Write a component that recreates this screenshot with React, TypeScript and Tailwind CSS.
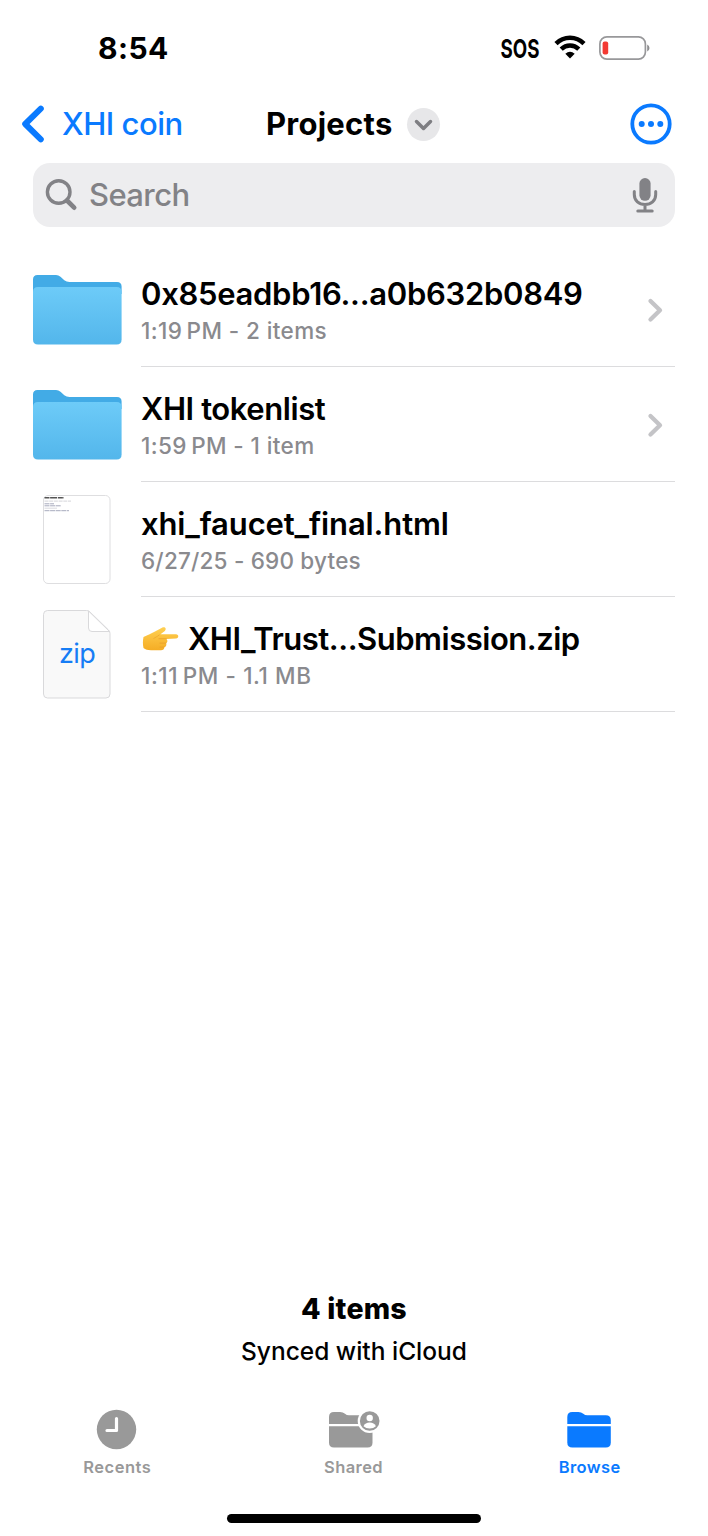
import React from "react";

function FolderIcon({ id }: { id: string }) {
  return (
    <svg width="90" height="72" viewBox="0 0 90 72" className="shrink-0" aria-hidden="true">
      <defs>
        <linearGradient id={id} x1="0" y1="0" x2="0" y2="1">
          <stop offset="0" stopColor="#6dcbf8" />
          <stop offset="1" stopColor="#53b6eb" />
        </linearGradient>
      </defs>
      <path d="M1 20V5.500Q1 1 5.500 1H24Q26.500 1 28.500 2.700L32.300 6.200Q34.500 8 37.500 8H85Q89.600 8 89.600 12.500V20Z" fill="#42abe6" />
      <path d="M1 18Q1 13 6 13H84.600Q89.600 13 89.600 18V65.500Q89.600 70.500 84.600 70.500H6Q1 70.500 1 65.500Z" fill={`url(#${id})`} />
    </svg>
  );
}

function HtmlThumb() {
  return (
    <svg width="68" height="90" viewBox="0 0 68 90" aria-hidden="true">
      <rect x="0.5" y="0.500" width="66.500" height="88" rx="4.500" fill="#fff" stroke="#dedee0" />
      <path d="M1.500 2.800H21" stroke="#555" strokeWidth="1.500" strokeDasharray="5 .6 7 .8" />
      <path d="M1.500 6.100H28" stroke="#c9c9cf" strokeWidth="0.800" strokeDasharray="4 .7" />
      <path d="M1.500 8.800H11M1.500 10.800H18M1.500 15.700H26" stroke="#9da0b5" strokeWidth="0.900" strokeDasharray="5 .6" />
      <path d="M1.500 13.200H14" stroke="#cfd0d8" strokeWidth="0.800" />
    </svg>
  );
}

function ZipIcon() {
  return (
    <div className="relative h-[90px] w-[68px]">
      <svg width="68" height="90" viewBox="0 0 68 90" aria-hidden="true">
        <path d="M4.500 0.500H43.500Q45.500 0.500 47 2L65.500 20Q67 21.500 67 23.500V84Q67 88 63 88H4.500Q0.500 88 0.500 84V4.500Q0.500 0.500 4.500 0.500Z" fill="#f9f9f9" stroke="#d9d9db" />
        <path d="M45.500 1V18Q45.500 21.500 49 21.500H66.500Z" fill="#fff" stroke="#d9d9db" strokeLinejoin="round" />
      </svg>
      <span className="absolute inset-x-0 top-[26px] text-center text-[27px] leading-[36px] tracking-[-0.6px] text-[#167df5]">zip</span>
    </div>
  );
}

function PointingHand() {
  return (
    <svg width="37" height="26" viewBox="0 0 37 26" className="ml-px shrink-0" role="img" aria-label="Pointing right">
      <defs>
        <linearGradient id="hand" x1="0" y1="0" x2="0" y2="1">
          <stop offset="0" stopColor="#ffd052" />
          <stop offset="1" stopColor="#f5ad25" />
        </linearGradient>
      </defs>
      <path d="M1.500 11C5 9.500 9 7.800 13 5.500L20 1.700C23 .2 25 2.800 22.800 4.900L18.500 8.200H34C37 8.200 37 12.300 34 12.500L24.500 13C26 14.500 25.500 16.500 24 17.200C25 18.800 24 20.800 22.200 21.200C22.500 23 21 24.200 19 24.200H9C5.500 24.200 3.500 23.500 1.500 22C.7 18 .7 15 1.500 11Z" fill="url(#hand)" />
      <path d="M17 12.700H24.200M18 17.100H24M18 21.100H22" stroke="#e9a02c" strokeWidth="0.800" strokeLinecap="round" fill="none" />
      <path d="M17.500 8.800C15 10.800 13 11.500 11.500 12.500" stroke="#eba62e" strokeWidth="0.800" fill="none" />
    </svg>
  );
}

function Row({ icon, title, sub, chevron }: { icon: React.ReactNode; title: React.ReactNode; sub: React.ReactNode; chevron?: boolean }) {
  return (
    <li className="flex h-[115px] pl-[32px] pr-[33px]">
      <div className="flex w-[90px] items-center justify-center">{icon}</div>
      <div className="ml-[19px] flex flex-1 items-center border-b border-[#dcdcde]">
        <div className="flex-1 pt-[4px]">
          <div className="flex h-[40px] items-center whitespace-nowrap text-black">{title}</div>
          <div className="h-[34px] whitespace-nowrap text-[22.5px] font-[550] leading-[34px] tracking-[0.4px] text-[#8a8a8e]">{sub}</div>
        </div>
        {chevron && (
          <svg width="18" height="28" viewBox="0 0 18 28" className="mr-[10px] mt-px" fill="none" stroke="#c4c4c7" strokeWidth="4.300" strokeLinecap="round" strokeLinejoin="round" aria-hidden="true">
            <path d="M3.500 5L13 14.300L3.500 23.500" />
          </svg>
        )}
      </div>
    </li>
  );
}

const folderTop = "M0 12V5Q0 0 5 0H11Q14 0 16 1.800Q17.600 3.300 20 3.300H38.500Q43.500 3.300 43.500 8.300V12Z";
const folderBody = "M0 14.300H43.500V30.500Q43.500 35.500 38.500 35.500H5Q0 35.500 0 30.500Z";

export default function App() {
  return (
    <main className="flex h-[1536px] w-[708px] flex-col overflow-hidden bg-white font-['Inter',sans-serif] text-black">
      <header className="flex h-[97px] items-center justify-between pl-[98px] pr-[57px]">
        <time className="mb-px text-[30px] font-bold leading-[36px] tracking-[0.45px]">8:54</time>
        <div className="flex items-center">
          <span className="flex w-[40px] justify-center">
            <span className="inline-block scale-x-[0.72] text-[26px] font-bold leading-[36px]">SOS</span>
          </span>
          <svg width="32" height="24" viewBox="0 0 32 24" className="mb-[3px] ml-[14px]" fill="none" stroke="#000" strokeWidth="4.500" aria-hidden="true">
            <path d="M2 8.600C9.800 .8 22.200 .8 30 8.600" />
            <path d="M7.200 14.200C12.200 9.400 19.800 9.400 24.800 14.200" />
            <path d="M16 23.500L11.300 18.800Q16 14.900 20.700 18.800Z" fill="#000" stroke="none" />
          </svg>
          <svg width="52" height="26" viewBox="0 0 52 26" className="mb-[2px] ml-[13px]" aria-hidden="true">
            <rect x="0.900" y="1.900" width="45.500" height="22.200" rx="7" fill="#fff" stroke="#98989a" strokeWidth="1.700" />
            <rect x="3.600" y="6.500" width="5.600" height="13" rx="2" fill="#f33a33" />
            <path d="M48.200 9.500Q50.500 10.500 50.500 13Q50.500 15.500 48.200 16.500Z" fill="#8e8e90" />
          </svg>
        </div>
      </header>

      <nav className="flex h-[54px] items-center pl-[20px] pr-[36px]">
        <button className="flex items-center text-[#0a7aff]">
          <svg width="25" height="38" viewBox="0 0 25 38" fill="none" stroke="currentColor" strokeWidth="6" strokeLinecap="round" strokeLinejoin="round" aria-hidden="true">
            <path d="M20.800 3.700L5.200 19L20.800 34.300" />
          </svg>
          <span className="ml-[17px] w-[204px] text-left text-[31px] font-[470] leading-[40px] tracking-[-0.5px]">XHI coin</span>
        </button>
        <h1 className="w-[141px] whitespace-nowrap text-[31px] font-[750] leading-[40px] tracking-[0.25px]">Projects</h1>
        <button className="flex h-[33px] w-[33px] items-center justify-center rounded-full bg-[#e7e7e9]" aria-label="Folder options">
          <svg width="19" height="12" viewBox="0 0 19 12" className="mt-[2px]" fill="none" stroke="#7e7e82" strokeWidth="3.500" strokeLinecap="round" strokeLinejoin="round" aria-hidden="true">
            <path d="M2.500 2.500L9.500 9.500L16.500 2.500" />
          </svg>
        </button>
        <button className="ml-auto" aria-label="More">
          <svg width="42" height="42" viewBox="0 0 42 42" fill="#0a7aff" aria-hidden="true">
            <circle cx="21" cy="21" r="18.700" fill="none" stroke="#0a7aff" strokeWidth="3.800" />
            <circle cx="11.700" cy="21" r="3" />
            <circle cx="21" cy="21" r="3" />
            <circle cx="30.300" cy="21" r="3" />
          </svg>
        </button>
      </nav>

      <div className="mx-[33px] mt-[12px] flex h-[64px] items-center rounded-[17px] bg-[#ededef] pl-[12px] pr-[16px] text-[#828286]">
        <svg width="34" height="34" viewBox="0 0 34 34" fill="none" stroke="currentColor" strokeLinecap="round" aria-hidden="true">
          <circle cx="13.700" cy="14" r="11.300" strokeWidth="3.400" />
          <path d="M22 22.500L29.200 29.700" strokeWidth="4.600" />
        </svg>
        <span className="ml-[10px] flex-1 text-[31px] font-medium leading-[40px] tracking-[-0.6px]">Search</span>
        <svg width="28" height="38" viewBox="0 0 28 38" fill="none" stroke="currentColor" strokeWidth="3" strokeLinecap="round" aria-hidden="true">
          <rect x="8.400" y="2" width="11.200" height="22.800" rx="5.600" fill="currentColor" stroke="none" />
          <path d="M3.300 15.500V18.500C3.300 25 8 28.600 14 28.600S24.700 25 24.700 18.500V15.500M14 29V34.500M6.800 35H21.200" />
        </svg>
      </div>

      <ul className="mt-[25px]">
        <Row icon={<FolderIcon id="f1" />} title={<span className="text-[31px] font-[560] tracking-[-0.3px]">0x85eadbb16...a0b632b0849</span>} sub={<>1:19{"\u2009"}PM - 2 items</>} chevron />
        <Row icon={<FolderIcon id="f2" />} title={<span className="text-[31px] font-[560] tracking-[-0.42px]">XHI tokenlist</span>} sub={<>1:59{"\u2009"}PM - 1 item</>} chevron />
        <Row icon={<HtmlThumb />} title={<span className="text-[31px] font-[560] tracking-[-0.13px]">xhi_faucet_final.html</span>} sub={<span className="tracking-[0.2px]">6/27/25 - 690 bytes</span>} />
        <Row icon={<ZipIcon />} title={<><PointingHand /><span className="ml-[9px] text-[31px] font-[560] tracking-[-0.48px]">XHI_Trust...Submission.zip</span></>} sub={<span className="tracking-[0.6px]">1:11{"\u2009"}PM - 1.1 MB</span>} />
      </ul>

      <div className="mt-auto text-center">
        <p className="text-[28.500px] font-extrabold leading-[42px] tracking-[0.2px]">4 items</p>
        <p className="text-[24.500px] font-medium leading-[43px]">Synced with iCloud</p>
      </div>

      <footer className="mt-[34px] flex h-[76px] w-[707px] text-[16.500px] font-semibold leading-[24px] tracking-[0.5px] text-[#999]">
        <div className="flex flex-1 flex-col items-center">
          <svg width="42" height="44" viewBox="0 0 42 44" className="mr-px" aria-hidden="true">
            <circle cx="20.500" cy="22.500" r="19.700" fill="#999" />
            <path d="M20.500 11.500V23.500H11" fill="none" stroke="#fff" strokeWidth="3.200" strokeLinecap="round" strokeLinejoin="round" />
          </svg>
          <span className="mr-px mt-[4px]">Recents</span>
        </div>
        <div className="flex flex-1 flex-col items-center">
          <svg width="52" height="44" viewBox="0 0 52 44" aria-hidden="true">
            <g transform="translate(1 5)" fill="#999">
              <path d={folderTop} />
              <path d={folderBody} />
            </g>
            <circle cx="41.700" cy="14" r="12" fill="#fff" />
            <circle cx="41.700" cy="14" r="9.800" fill="#999" />
            <circle cx="41.700" cy="11" r="3.200" fill="#fff" />
            <path d="M35.500 19.200Q37.200 15.600 41.700 15.600T47.900 19.200Q45.500 21.500 41.700 21.500T35.500 19.200Z" fill="#fff" />
          </svg>
          <span className="mt-[4px] tracking-[0.4px]">Shared</span>
        </div>
        <div className="flex flex-1 flex-col items-center text-[#0a7aff]">
          <svg width="44" height="44" viewBox="0 0 44 44" aria-hidden="true">
            <g transform="translate(0.300 5)" fill="currentColor">
              <path d={folderTop} />
              <path d={folderBody} />
            </g>
          </svg>
          <span className="ml-px mt-[4px] tracking-[0.4px]">Browse</span>
        </div>
      </footer>
      <div className="mx-auto mb-[13px] mt-[31px] h-[9px] w-[254px] shrink-0 rounded-full bg-black" />
    </main>
  );
}
